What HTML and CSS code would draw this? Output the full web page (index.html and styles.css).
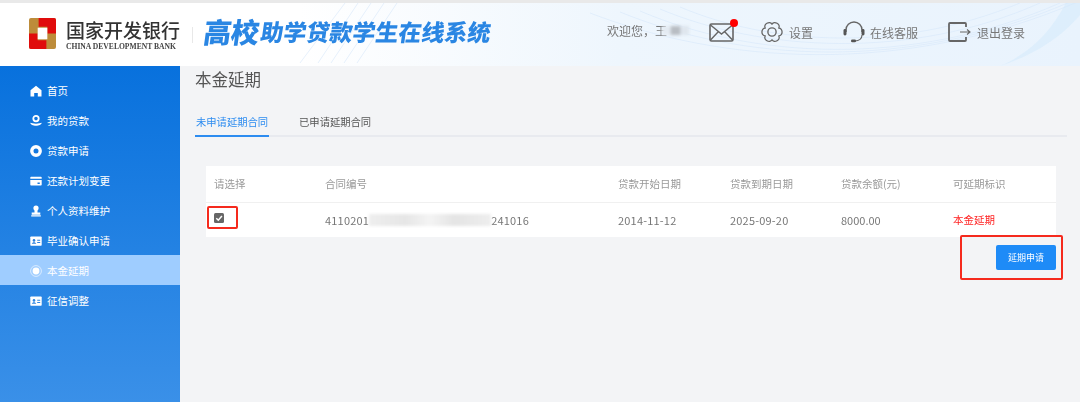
FILE: index.html
```html
<!DOCTYPE html>
<html lang="zh-CN">
<head>
<meta charset="utf-8">
<title>高校助学贷款学生在线系统</title>
<link rel="stylesheet" href="styles.css">
</head>
<body>
<div class="page">
  <header class="header">
    <svg class="header-art" viewBox="0 0 1080 63" preserveAspectRatio="none" aria-hidden="true">
      <g fill="none" stroke="#d6e8fa" stroke-width="0.6">
        <path d="M590 10C720 60 900 75 1080 -2"/>
        <path d="M620 9C740 58 905 70 1070 -1"/>
        <path d="M640 8C750 55 910 66 1060 0"/>
        <path d="M660 6C760 48 910 58 1040 0"/>
        <path d="M680 4C770 42 900 50 1020 0"/>
        <path d="M345 0L300 60M358 0L318 60M371 0L331 60M384 0L344 60M397 0L357 60"/>
      </g>
      <path d="M1000 63C1040 50 1065 30 1080 12V0H1066C1050 30 1030 50 1000 63Z" fill="#d4e9fc" opacity=".55"/>
    </svg>
    <div class="brand">
      <svg class="logo-mark" viewBox="0 0 28 32" aria-hidden="true">
        <rect width="28" height="32" rx="2" fill="#bd8c3a"/>
        <path d="M0 16H9V23H18V32H2a2 2 0 0 1-2-2Z" fill="#e00c0c"/>
        <path d="M10 0H26a2 2 0 0 1 2 2V16H19V9H10Z" fill="#e00c0c"/>
        <rect x="9" y="10" width="10" height="12" fill="#fff"/>
      </svg>
      <div class="bank">
        <div class="bank-cn">国家开发银行</div>
        <div class="bank-en">CHINA DEVELOPMENT BANK</div>
      </div>
      <div class="brand-rule"></div>
      <div class="system"><span class="system-big">高校</span><span class="system-small">助学贷款学生在线系统</span></div>
    </div>
    <nav class="tools">
      <div class="welcome">欢迎您，王<span class="mosaic mosaic-name"></span></div>
      <div class="mail">
        <svg class="icon-mail" viewBox="0 0 25 19" aria-hidden="true">
          <rect x="1" y="1" width="23" height="17" rx="1.5" fill="none" stroke="#666" stroke-width="1.6"/>
          <path d="M1.5 2L12.5 11L23.5 2M1.500 17L9.500 8.500M23.500 17L15.500 8.500" fill="none" stroke="#666" stroke-width="1.4"/>
        </svg>
        <span class="dot"></span>
      </div>
      <div class="tool tool-set">
        <svg class="icon-gear" viewBox="0 0 24 24" aria-hidden="true">
          <path d="M19.360 7.750C24.200 7.550 24.200 16.450 19.360 16.250C21.960 20.360 14.260 24.800 12 20.500C9.740 24.800 2.040 20.360 4.640 16.250C-.2 16.450 -.2 7.550 4.640 7.750C2.040 3.640 9.740 -.8 12 3.500C14.260 -.8 21.960 3.640 19.360 7.750Z" fill="none" stroke="#666" stroke-width="1.400" stroke-linejoin="round"/>
          <circle cx="12" cy="12" r="4.500" fill="none" stroke="#666" stroke-width="1.500"/>
        </svg>
        <span>设置</span>
      </div>
      <div class="tool tool-help">
        <svg class="icon-head" viewBox="0 0 22 22" aria-hidden="true">
          <path d="M3 11V9a8 8 0 0 1 16 0v2" fill="none" stroke="#666" stroke-width="1.400"/>
          <rect x="0.500" y="8" width="3" height="6.500" rx="1.400" fill="#555"/>
          <rect x="18.500" y="8" width="3" height="6.500" rx="1.400" fill="#555"/>
          <path d="M19 14c0 3.500-3 5.800-7 6" fill="none" stroke="#666" stroke-width="1.200"/>
          <rect x="8" y="18.600" width="5" height="2.600" rx="1.300" fill="#555"/>
        </svg>
        <span>在线客服</span>
      </div>
      <div class="tool tool-exit">
        <svg class="icon-exit" viewBox="0 0 23 20" aria-hidden="true">
          <path d="M18 5V2a1 1 0 0 0-1-1H2a1 1 0 0 0-1 1v16a1 1 0 0 0 1 1h15a1 1 0 0 0 1-1v-3" fill="none" stroke="#666" stroke-width="1.800"/>
          <path d="M12 10H22M19 7.500L22 10L19 12.500" fill="none" stroke="#666" stroke-width="1.100"/>
        </svg>
        <span>退出登录</span>
      </div>
    </nav>
  </header>
  <div class="body">
    <aside class="sidebar">
      <a class="side-item">
        <svg class="side-icon" viewBox="0 0 12 12"><path d="M6 .8L11.500 5.200V11.500H7.800V8H4.200V11.500H.5V5.200Z" fill="#fff"/></svg>
        <span>首页</span>
      </a>
      <a class="side-item">
        <svg class="side-icon" viewBox="0 0 12 12"><circle cx="6" cy="3.600" r="2.700" fill="none" stroke="#fff" stroke-width="1.800"/><path d="M.3 7.800C2 8.900 10 8.900 11.700 7.800C11.500 11.800 .5 11.800 .3 7.800Z" fill="#fff"/></svg>
        <span>我的贷款</span>
      </a>
      <a class="side-item">
        <svg class="side-icon" viewBox="0 0 12 12"><circle cx="6" cy="6" r="4.200" fill="none" stroke="#fff" stroke-width="3.400"/></svg>
        <span>贷款申请</span>
      </a>
      <a class="side-item">
        <svg class="side-icon" viewBox="0 0 12 12"><path d="M.3 2.500a.8.8 0 0 1 .8-.8h9.800a.8.8 0 0 1 .8.8v1.200H.3ZM.3 5h11.400v4.700a.8.8 0 0 1-.8.8H1.100a.8.8 0 0 1-.8-.8ZM7.500 7.500V9h2.300V7.500Z" fill="#fff" fill-rule="evenodd"/></svg>
        <span>还款计划变更</span>
      </a>
      <a class="side-item">
        <svg class="side-icon" viewBox="0 0 12 12"><circle cx="6" cy="3" r="2.600" fill="#fff"/><path d="M4.500 5h3v2.500h2.800v2.200H1.700V7.500h2.800ZM1.200 10.300h9.600v1.200H1.200Z" fill="#fff"/></svg>
        <span>个人资料维护</span>
      </a>
      <a class="side-item">
        <svg class="side-icon" viewBox="0 0 12 12"><rect x=".3" y="1.500" width="11.400" height="9.300" rx=".8" fill="#fff"/><circle cx="4" cy="5.400" r="1.300" fill="#2a7fdd"/><path d="M1.800 8.800c.3-2.200 4-2.200 4.400 0ZM7.200 4.700h3v1h-3ZM7.200 7h3v1h-3Z" fill="#2a7fdd"/></svg>
        <span>毕业确认申请</span>
      </a>
      <a class="side-item side-active">
        <svg class="side-icon" viewBox="0 0 12 12"><circle cx="6" cy="6" r="5.400" fill="none" stroke="#fff" stroke-opacity=".6" stroke-width="1"/><circle cx="6" cy="6" r="3.400" fill="#fff"/></svg>
        <span>本金延期</span>
      </a>
      <a class="side-item">
        <svg class="side-icon" viewBox="0 0 12 12"><rect x=".3" y="1.500" width="11.400" height="9.300" rx=".8" fill="#fff"/><circle cx="4" cy="5.400" r="1.300" fill="#2f86e2"/><path d="M1.800 8.800c.3-2.200 4-2.200 4.400 0ZM7.200 4.700h3v1h-3ZM7.200 7h3v1h-3Z" fill="#2f86e2"/></svg>
        <span>征信调整</span>
      </a>
    </aside>
    <main class="content">
      <h1 class="title">本金延期</h1>
      <div class="tabs">
        <div class="tab tab-active">未申请延期合同</div>
        <div class="tab">已申请延期合同</div>
      </div>
      <table class="grid">
        <thead>
          <tr>
            <th class="c1">请选择</th><th class="c2">合同编号</th><th class="c3">贷款开始日期</th><th class="c4">贷款到期日期</th><th class="c5">贷款余额(元)</th><th class="c6">可延期标识</th>
          </tr>
        </thead>
        <tbody>
          <tr>
            <td>
              <span class="check"><svg viewBox="0 0 10 10" aria-hidden="true"><path d="M2.300 5.200L4.300 7.200L7.900 3" fill="none" stroke="#fff" stroke-width="1.500"/></svg></span>
            </td>
            <td class="value"><div class="contract"><span>4110201</span><span class="mosaic mosaic-no"></span><span>241016</span></div></td>
            <td class="value date">2014-11-12</td>
            <td class="value date">2025-09-20</td>
            <td class="value">8000.00</td>
            <td class="flag">本金延期</td>
          </tr>
        </tbody>
      </table>
      <div class="actions"><button class="apply">延期申请</button></div>
      <div class="mark mark-check"></div>
      <div class="mark mark-btn"></div>
    </main>
  </div>
</div>
</body>
</html>
```
FILE: styles.css
```css
* { box-sizing: border-box; }
html, body { margin: 0; padding: 0; height: 100%; overflow: hidden; }
body {
  font-family: "Noto Sans CJK SC", "Noto Sans", sans-serif;
  background: #f3f4f6;
  color: #666;
}
.page { width: 1080px; height: 402px; display: flex; flex-direction: column; border-top: 3px solid #e9e9e9; filter: blur(.35px); }

.header {
  position: relative;
  height: 63px;
  display: flex;
  align-items: flex-start;
  justify-content: space-between;
  background: linear-gradient(90deg, #fff 0, #fff 300px, #eef6fd 620px, #e9f3fd 1080px);
  overflow: hidden;
}
.header-art { position: absolute; inset: 0; width: 100%; height: 100%; }
.brand { position: relative; display: flex; align-items: flex-start; padding: 15px 0 0 29px; }
.logo-mark { width: 27px; height: 31px; display: block; }
.bank { margin-left: 10px; width: 115px; }
.bank-cn { font-size: 19px; line-height: 23px; font-weight: 500; color: #333; white-space: nowrap; }
.bank-en { font-family: "Liberation Serif", serif; font-size: 7.600px; line-height: 9px; font-weight: 700; color: #444; white-space: nowrap; margin-top: 1px; }
.brand-rule { width: 1px; height: 16px; background: #e8e8e8; margin: 9px 0 0 11px; }
.system { margin: -3px 0 0 11px; display: flex; align-items: center; height: 32px; color: #2a86e3; font-weight: 900; white-space: nowrap; transform: skewX(-8deg); }
.system-big { font-size: 28px; letter-spacing: -.5px; }
.system-small { font-size: 23px; margin-left: 2px; }

.tools { position: relative; display: flex; align-items: flex-start; font-size: 12px; color: #777; padding: 18px 55px 0 0; }
.welcome { line-height: 17px; margin-top: 1px; display: flex; align-items: center; white-space: nowrap; width: 102px; }
.mosaic { display: inline-block; filter: blur(1.500px); }
.mosaic-name { width: 27px; height: 9px; margin-left: -5px; background: linear-gradient(90deg, #e4ebf2 0 30%, #b8bdc3 35% 65%, #dfe6ee 70%); }
.mail { position: relative; width: 25px; height: 19px; margin-top: 2px; }
.icon-mail { width: 25px; height: 19px; display: block; }
.dot { position: absolute; right: -4px; top: -4px; width: 8px; height: 8px; border-radius: 50%; background: #f00; }
.tool { display: flex; align-items: center; gap: 6px; height: 22px; white-space: nowrap; }
.tool-set { margin-left: 27px; }
.tool-help { margin-left: 30px; gap: 5px; }
.tool-exit { margin-left: 30px; }
.icon-gear { width: 22px; height: 22px; }
.icon-head { width: 22px; height: 22px; }
.icon-exit { width: 23px; height: 20px; }

.body { flex: 1; display: flex; min-height: 0; }
.sidebar { width: 180px; padding-top: 9px; background: linear-gradient(180deg, #0871dd 0, #3a90e8 100%); flex: none; }
.side-item { display: flex; align-items: center; height: 30px; padding-left: 30px; gap: 5px; font-size: 10.500px; color: #fff; }
.side-active { background: #9fcdff; }
.side-icon { width: 12px; height: 12px; flex: none; margin-top: 2px; }

.content { position: relative; flex: 1; padding: 0 24px 0 15px; }
.title { margin: 0; padding-top: 1px; font-size: 16.500px; line-height: 24px; font-weight: 400; color: #555; }
.tabs { display: flex; gap: 29px; margin-top: 19px; height: 27px; border-bottom: 2px solid #e8eaef; width: 872px; }
.tab { font-size: 10.300px; line-height: 24px; height: 27px; color: #555; padding: 0 1px; border-bottom: 2px solid transparent; }
.tab-active { color: #2d8cf0; border-bottom-color: #2d8cf0; }

.grid { border-collapse: collapse; table-layout: fixed; width: 850px; margin: 29px 0 0 11px; background: #fff; font-size: 10.500px; }
.grid th, .grid td { text-align: left; padding: 0 0 0 8px; font-weight: 400; }
.grid th { height: 36px; color: #999; border-bottom: 1px solid #f0f0f0; }
.grid td { height: 35px; color: #777; }
.grid .value { font-size: 11px; }
.c1 { width: 111px; }
.c2 { width: 293px; }
.c3 { width: 112px; }
.c4 { width: 111px; }
.c5 { width: 112px; }
.c6 { width: 111px; }
.check { display: block; width: 10px; height: 10px; margin-bottom: 3px; border-radius: 1.500px; background: #666; }
.check svg { display: block; width: 10px; height: 10px; }
.contract { display: flex; align-items: center; white-space: nowrap; letter-spacing: .2px; }
.mosaic-no { width: 122px; height: 12px; background: linear-gradient(90deg, #eee, #e6e6e6 30%, #f4f4f4 50%, #e4e4e4 70%, #eee); }
.grid .date { letter-spacing: .2px; }
.grid .flag { color: #f22; }

.actions { display: flex; justify-content: flex-end; width: 861px; margin-top: 8px; }
.apply { width: 60px; height: 25px; border: 0; border-radius: 2px; background: #1e8bf7; color: #fff; font: inherit; font-size: 9px; padding: 0; }

.mark { position: absolute; border: 2px solid #f52a1d; border-radius: 2px; }
.mark-check { left: 27px; top: 140px; width: 31px; height: 23px; }
.mark-btn { left: 780px; top: 169px; width: 103px; height: 45px; }
```
